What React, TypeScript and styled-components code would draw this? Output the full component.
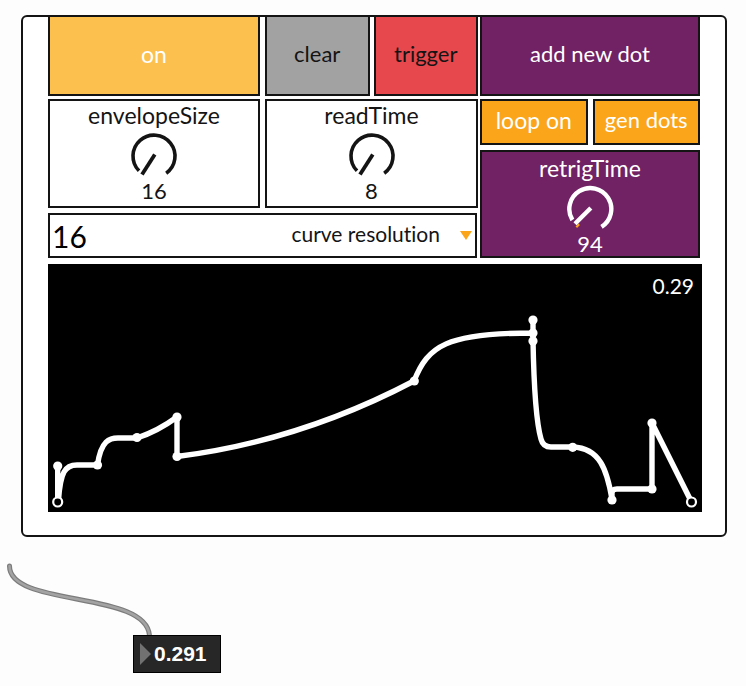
import React, { useState } from "react";
import styled, { createGlobalStyle } from "styled-components";

const ink = "#141414";
const orange = "#fba51b";
const purple = "#702265";

const GlobalStyle = createGlobalStyle`
  * { box-sizing: border-box; }
  body {
    margin: 0;
    background: #fdfdfd;
    color: ${ink};
    font-family: Lato, "Noto Sans", sans-serif;
    font-size: 22px;
    line-height: 28px;
    font-variant-ligatures: none;
  }
`;

const Page = styled.main`
  padding: 15px 19px 0 21px;
`;

const Panel = styled.section`
  border: 2px solid ${ink};
  border-radius: 6px;
  background: #fff;
  padding: 0 23px 23px 25px;
`;

const Controls = styled.div`
  display: grid;
  grid-template-columns: 430fr 220fr;
  column-gap: 2px;
  row-gap: 3px;
  margin: -2px 2px 6px 0;
`;

const Split = styled.div<{ $columns: string; $gap: number }>`
  display: grid;
  grid-template-columns: ${(p) => p.$columns};
  gap: ${(p) => p.$gap}px;
`;

const Stack = styled.div`
  display: flex;
  flex-direction: column;
  gap: 5px;
`;

const PadButton = styled.button<{ $bg: string; $fg?: string; $small?: boolean; $large?: boolean }>`
  min-width: 0;
  height: ${(p) => (p.$small ? 46 : 81)}px;
  padding: 0 0 4px;
  border: 2px solid ${ink};
  background: ${(p) => p.$bg};
  color: ${(p) => p.$fg ?? "#fff"};
  font: inherit;
  font-size: ${(p) => (p.$large ? 23 : 22)}px;
  font-variant-ligatures: none;
  white-space: nowrap;
  cursor: pointer;
`;

const DialBox = styled.label<{ $dark?: boolean }>`
  display: flex;
  flex-direction: column;
  align-items: center;
  flex: 1;
  min-width: 0;
  padding: ${(p) => (p.$dark ? "2px 0 1px" : "0 0 4px")};
  border: 2px solid ${ink};
  background: ${(p) => (p.$dark ? purple : "#fff")};
  color: ${(p) => (p.$dark ? "#fff" : ink)};
  font-size: 23px;
`;

const DialFace = styled.span`
  position: relative;
  height: 48px;
  margin-top: 3px;
  svg { display: block; }
`;

const DialInput = styled.input`
  position: absolute;
  inset: 0;
  width: 48px;
  height: 48px;
  margin: 0;
  opacity: 0;
  cursor: pointer;
`;

const DialValue = styled.output`
  font-size: 22px;
  line-height: 22px;
`;

const ResolutionBox = styled.div`
  display: grid;
  align-items: center;
  height: 45px;
  margin-right: 1px;
  border: 2px solid ${ink};
  background: #fff;
  > * { grid-area: 1 / 1; }
`;

const ResolutionSelect = styled.select`
  width: 100%;
  height: 41px;
  padding: 0 2px;
  appearance: none;
  border: 0;
  background: transparent;
  color: #000;
  font-family: inherit;
  font-size: 30px;
`;

const ResolutionLabel = styled.label`
  display: flex;
  align-items: center;
  justify-content: flex-end;
  gap: 20px;
  padding-right: 3px;
  font-size: 21px;
  pointer-events: none;
`;

const ResolutionName = styled.span`
  padding-bottom: 4px;
`;

const Display = styled.div`
  position: relative;
  background: #000;
  svg { display: block; width: 100%; height: auto; }
`;

const Reading = styled.output`
  position: absolute;
  top: 8px;
  right: 8px;
  color: #fff;
  font-size: 21px;
`;

const Patch = styled.div`
  margin: 26px 0 0 -14px;
  svg { display: block; }
`;

const NumberBox = styled.label`
  display: flex;
  align-items: center;
  gap: 3px;
  width: 88px;
  height: 38px;
  margin-left: 126px;
  padding-left: 6px;
  border: 1px solid #000;
  background: #272727;
`;

const NumberInput = styled.input`
  flex: 1;
  min-width: 0;
  padding: 0;
  border: 0;
  background: transparent;
  color: #fff;
  font: bold 21px "Liberation Sans", Arial, sans-serif;
`;

type DialProps = { name: string; initial: number; max: number; dark?: boolean };

function Dial({ name, initial, max, dark }: DialProps) {
  const [value, setValue] = useState(initial);
  return (
    <DialBox $dark={dark}>
      {name}
      <DialFace>
        <svg width="48" height="48" viewBox="0 0 48 48" fill="none" stroke="currentColor" aria-hidden="true">
          {dark ? (
            <>
              <path d="M12.5 41.5 L11 40" stroke={orange} strokeWidth="4" />
              <path d="M6.4 35 A21 21 0 1 1 35.5 41.8" strokeWidth="4.4" />
              <path d="M24.8 23 L9 38.8" strokeWidth="4.4" />
            </>
          ) : (
            <>
              <path d="M9 38.8 A21 21 0 1 1 36.2 41.2" strokeWidth="3.6" />
              <path d="M24.8 22.6 L12 42.6" strokeWidth="3.8" />
            </>
          )}
        </svg>
        <DialInput
          type="range"
          min={0}
          max={max}
          value={value}
          aria-label={name}
          onChange={(e) => setValue(Number(e.target.value))}
        />
      </DialFace>
      <DialValue>{value}</DialValue>
    </DialBox>
  );
}

const envelope =
  "M57.7 466 V498 M58.5 500 C60.5 472 65 465 77 465 H97.5 C101 440 110 438 118 438 H137 " +
  "Q158 431 177 417 V456.5 Q300 441 414 381 C428 346 446 333 533 333 M533 320 V340 " +
  "C534 395 537 425 541 439 Q543 447 551 447 H572.7 C600 448 607 470 612 499 " +
  "V493 Q612 489 617 489 H652 V423 L691.5 502";

const dots = [
  [57.7, 466], [97.5, 465], [137, 437.5], [177, 417], [177, 456.5], [414.3, 381],
  [533, 320], [533, 333], [533, 341], [572.7, 447.3], [612, 500], [652, 489], [652, 423],
];

const ends = [[57.7, 502], [691.5, 502]];

function Envelope() {
  return (
    <svg viewBox="48 264 654 248" role="img" aria-label="envelope curve">
      <path d={envelope} fill="none" stroke="#fff" strokeWidth="5.4" strokeLinejoin="round" />
      {dots.map(([x, y]) => (
        <circle key={`${x}-${y}`} cx={x} cy={y} r="4.6" fill="#fff" />
      ))}
      {ends.map(([x, y]) => (
        <circle key={x} cx={x} cy={y} r="4.5" fill="#000" stroke="#fff" strokeWidth="2.2" />
      ))}
    </svg>
  );
}

export default function App() {
  return (
    <Page>
      <GlobalStyle />
      <Panel>
        <Controls>
          <Split $columns="212fr 213fr" $gap={5}>
            <PadButton $bg="#fcc04e" $large>on</PadButton>
            <Split $columns="1fr 1fr" $gap={4}>
              <PadButton $bg="#a2a2a2" $fg={ink}>clear</PadButton>
              <PadButton $bg="#e6484d" $fg={ink}>trigger</PadButton>
            </Split>
          </Split>
          <PadButton $bg={purple}>add new dot</PadButton>
          <Stack>
            <Split $columns="212fr 213fr" $gap={5}>
              <Dial name="envelopeSize" initial={16} max={64} />
              <Dial name="readTime" initial={8} max={64} />
            </Split>
            <ResolutionBox>
              <ResolutionSelect id="resolution" defaultValue="16">
                <option>8</option>
                <option>16</option>
                <option>32</option>
              </ResolutionSelect>
              <ResolutionLabel htmlFor="resolution">
                <ResolutionName>curve resolution</ResolutionName>
                <svg width="12" height="9" viewBox="0 0 12 9" aria-hidden="true">
                  <path d="M0 0 H12 L6 9 Z" fill={orange} />
                </svg>
              </ResolutionLabel>
            </ResolutionBox>
          </Stack>
          <Stack>
            <Split $columns="1fr 1fr" $gap={5}>
              <PadButton $bg={orange} $small $large>loop on</PadButton>
              <PadButton $bg={orange} $small>gen dots</PadButton>
            </Split>
            <Dial name="retrigTime" initial={94} max={1000} dark />
          </Stack>
        </Controls>
        <Display>
          <Envelope />
          <Reading>0.29</Reading>
        </Display>
      </Panel>
      <Patch>
        <svg width="150" height="72" viewBox="7 563 150 72" fill="none" strokeLinecap="round" aria-hidden="true">
          <path d="M9.5 566 C9.5 608 149.5 590 149.5 637" stroke="#7c7c7c" strokeWidth="5" />
          <path d="M9.5 566 C9.5 608 149.5 590 149.5 637" stroke="#a3a3a3" strokeWidth="2.5" />
        </svg>
        <NumberBox>
          <svg width="11" height="22" viewBox="0 0 11 22" aria-hidden="true">
            <path d="M0 0 L11 11 L0 22 Z" fill="#717171" />
          </svg>
          <NumberInput type="text" inputMode="decimal" aria-label="curve value" defaultValue="0.291" />
        </NumberBox>
      </Patch>
    </Page>
  );
}
